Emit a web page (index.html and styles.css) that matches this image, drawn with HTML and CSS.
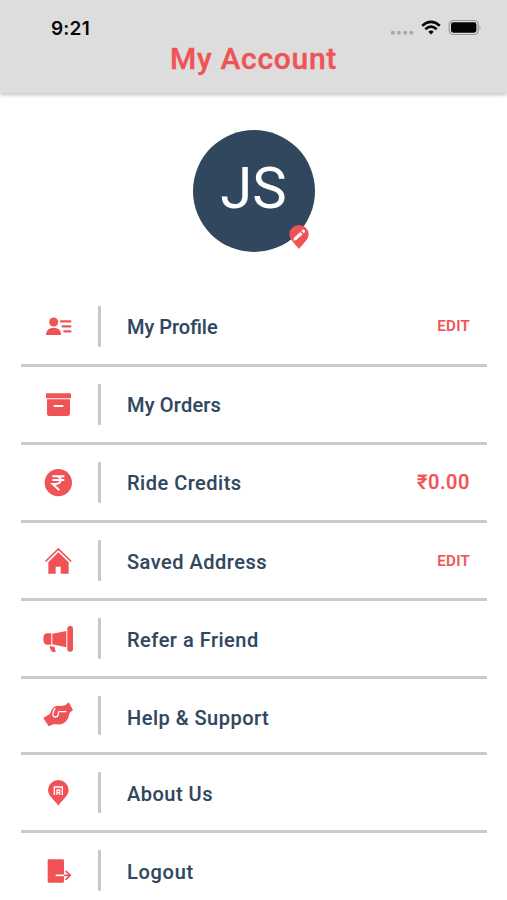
FILE: index.html
```html
<!DOCTYPE html>
<html lang="en">
<head>
<meta charset="utf-8">
<title>My Account</title>
<link rel="stylesheet" href="styles.css">
</head>
<body>
<header class="header">
  <div class="status">
    <span class="time">9:21</span>
    <svg class="indicators" width="92" height="18" viewBox="0 0 92 18">
      <g fill="#aaa"><circle cx="2.8" cy="13.8" r="2"/><circle cx="8.9" cy="13.8" r="2"/><circle cx="15.2" cy="13.8" r="2"/><circle cx="21.3" cy="13.8" r="2"/></g>
      <g fill="none" stroke="#050505" stroke-width="2.7"><path d="M32.2 6.7Q41 -1 49.8 6.7"/><path d="M35.3 10.2Q41 5.2 46.7 10.2"/></g>
      <path d="M38.3 12.7Q41 10.3 43.7 12.7L41 15.5Z" fill="#050505"/>
      <rect x="59.2" y="1.5" width="29" height="14" rx="4.3" fill="none" stroke="#999" stroke-width="1.2"/>
      <rect x="61" y="3.3" width="25.4" height="10.4" rx="2.4" fill="#050505"/>
      <path d="M89.5 6.2Q91.6 8.5 89.5 10.8Z" fill="#999"/>
    </svg>
  </div>
  <h1 class="title">My Account</h1>
</header>
<main>
  <div class="avatar">
    <span class="initials">JS</span>
    <svg class="edit-pin" width="22" height="26" viewBox="0 0 66 78">
      <path d="M33 75C26 64 4 48 4 31A29 28 0 0 1 62 31C62 48 40 64 33 75Z" fill="#f05355"/>
      <path d="M16 50L18 41L37 24L44 31L25 48ZM40 21L44 17Q47 16 51 20L51 24L47 28Z" fill="#fff"/>
    </svg>
  </div>
  <ul class="menu">
    <li class="row">
      <svg class="icon" viewBox="0 0 108 108"><circle cx="41" cy="39" r="13.5"/><path d="M18 78V74Q21 56 41 56T63 74V78Z"/><path class="line" d="M63 37H91M68 52H91M73 67H91"/></svg>
      <span class="bar"></span><span class="label profile">My Profile</span><span class="edit">EDIT</span>
    </li>
    <li class="row">
      <svg class="icon" viewBox="0 0 108 108"><rect x="18" y="19" width="75" height="15" rx="2"/><path d="M21 37H90V79Q90 87 82 87H28Q21 87 21 79Z"/><path class="cut" d="M41 57H70"/></svg>
      <span class="bar"></span><span class="label orders">My Orders</span>
    </li>
    <li class="row">
      <svg class="icon" viewBox="0 0 108 108"><circle cx="55" cy="53" r="41"/><path class="cut" d="M37 34H73M37 45H73M38 34H48Q62 34 62 45T47 57H38L58 76"/></svg>
      <span class="bar"></span><span class="label credits">Ride Credits</span><span class="amount">₹0.00</span>
    </li>
    <li class="row low">
      <svg class="icon" viewBox="0 0 108 108"><path class="roof" d="M18 54L55 18L92 54"/><path d="M55 28L86 58V92H62V71H47V92H25V58Z"/></svg>
      <span class="bar"></span><span class="label address">Saved Address</span><span class="edit">EDIT</span>
    </li>
    <li class="row low">
      <svg class="icon" viewBox="0 0 108 108"><path d="M34 37V71H21Q10 71 10 54T21 37ZM37 38L79 30V79L37 70ZM28 75L44 78L47 93H40Q33 93 28 75Z"/><rect x="82" y="15" width="17" height="77" rx="7"/></svg>
      <span class="bar"></span><span class="label refer">Refer a Friend</span>
    </li>
    <li class="row low short">
      <svg class="icon" viewBox="0 0 108 108"><path d="M10 57L24 48L29 46Q34 31 42 24Q50 19 62 21L76 19L86 10L99 33L89 41Q87 57 77 68Q67 78 50 76H40L26 82Z"/><path class="seam" d="M79 38H59Q54 38 55 45Q54 54 46 54Q37 53 39 42Q41 33 46 28"/></svg>
      <span class="bar"></span><span class="label help">Help &amp; Support</span>
    </li>
    <li class="row low">
      <svg class="icon" viewBox="0 0 108 108"><path d="M55 92C48 79 24 64 24 45A31 30 0 0 1 86 45C86 64 62 79 55 92Z"/><path class="mark" d="M43 60V36H67V60M51 60V45H59V60M51 53H59"/></svg>
      <span class="bar"></span><span class="label about">About Us</span>
    </li>
    <li class="row low">
      <svg class="icon" viewBox="0 0 108 108"><rect x="23" y="19" width="49" height="70" rx="4"/><path class="exit-cut" d="M47 67H74"/><path class="exit" d="M74 67H91M78 55L91 67L78 79"/></svg>
      <span class="bar"></span><span class="label logout">Logout</span>
    </li>
  </ul>
</main>
</body>
</html>
```
FILE: styles.css
```css
* { box-sizing: border-box; }
body { margin: 0; height: 900px; overflow: hidden; background: #fff; font-family: Roboto, sans-serif; color: #30475e; }
.header { height: 93px; background: #ddd; box-shadow: 0 2px 4px rgba(0, 0, 0, .24); }
.status { height: 39px; padding: 19px 25px 0 51px; display: flex; justify-content: space-between; align-items: flex-start; }
.time { font: 600 19px/19px Inter, sans-serif; letter-spacing: .2px; color: #080808; }
.title { margin: 0; text-align: center; font-size: 30px; line-height: 40px; font-weight: 500; letter-spacing: .7px; color: #f05355; -webkit-text-stroke: .4px #f05355; }
.avatar { position: relative; width: 122px; height: 122px; margin: 36.5px auto 0; border-radius: 50%; background: #30475e; display: flex; justify-content: center; }
.initials { color: #fff; font: 400 58px/117px Roboto, sans-serif; }
.edit-pin { position: absolute; left: 95px; top: 94px; }
.menu { list-style: none; margin: 37.5px 20px 0 21px; padding: 0; }
.row { height: 78px; padding: 17px 17px 0 19px; display: flex; align-items: flex-start; border-bottom: 3px solid #c8cbce; }
.row:last-child { border: 0; }
.short { height: 76px; }
.icon { width: 36px; height: 36px; margin-top: 3px; fill: #f05355; }
.bar { width: 3px; height: 41px; margin-left: 22px; background: #c6c9cc; border-radius: 1px; }
.short .bar { height: 39px; }
.label { margin-left: 26px; font-size: 20px; line-height: 42px; font-weight: 500; letter-spacing: .5px; white-space: nowrap; -webkit-text-stroke: .1px #30475e; }
.low .label { line-height: 44px; }
.profile { letter-spacing: 0; }
.orders { letter-spacing: .2px; }
.logout { letter-spacing: .7px; }
.edit, .amount { margin-left: auto; color: #f05355; font-weight: 500; line-height: 41px; -webkit-text-stroke: .2px #f05355; }
.low .edit { line-height: 43px; }
.edit { font-size: 15px; letter-spacing: .3px; }
.amount { font-size: 20px; letter-spacing: .6px; }
.line { stroke: #f05355; stroke-width: 7; stroke-linecap: round; }
.cut { fill: none; stroke: #fff; stroke-width: 6; }
.roof { fill: none; stroke: #f05355; stroke-width: 5; stroke-linecap: round; }
.seam { fill: none; stroke: #fff; stroke-width: 4; }
.mark { fill: none; stroke: #fff; stroke-width: 4; }
.exit-cut { stroke: #fff; stroke-width: 5; }
.exit { fill: none; stroke: #f05355; stroke-width: 5; stroke-linecap: round; }
```
